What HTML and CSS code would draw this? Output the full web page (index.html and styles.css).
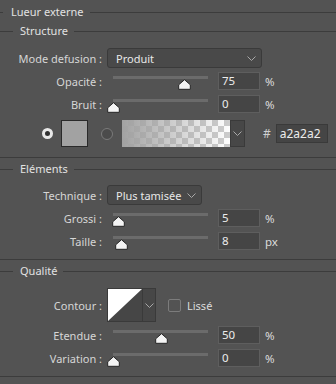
FILE: index.html
```html
<!DOCTYPE html>
<html lang="fr">
<head>
  <meta charset="UTF-8" />
  <title>Lueur externe</title>
  <link rel="stylesheet" href="styles.css">
</head>
<body>
  <div class="panel">
    <div class="legend first"><span>Lueur externe</span></div>
    <div class="legend sub"><span>Structure</span></div>

    <div class="row mode">
      <label class="lbl">Mode defusion :</label>
      <div class="select mode-select">Produit
        <svg class="chev" width="9" height="5" viewBox="0 0 9 5"><path d="M0.5 0.5 L4.5 4.5 L8.5 0.5" /></svg>
      </div>
    </div>

    <div class="row slide r-opacity">
      <label class="lbl">Opacité :</label>
      <div class="slider">
        <div class="track"></div>
        <svg class="thumb" style="left: 75%" width="13" height="11" viewBox="0 0 13 11"><path d="M6.5 0.7 L12.3 5.8 L12.3 10.3 L0.7 10.3 L0.7 5.8 Z" /></svg>
      </div>
      <div class="num">75</div><span class="unit">%</span>
    </div>

    <div class="row slide r-next">
      <label class="lbl">Bruit :</label>
      <div class="slider">
        <div class="track"></div>
        <svg class="thumb" style="left: 0%" width="13" height="11" viewBox="0 0 13 11"><path d="M6.5 0.7 L12.3 5.8 L12.3 10.3 L0.7 10.3 L0.7 5.8 Z" /></svg>
      </div>
      <div class="num">0</div><span class="unit">%</span>
    </div>

    <div class="row color-row">
      <span class="radio on"></span>
      <span class="swatch"></span>
      <span class="radio off"></span>
      <div class="gradient-pick">
        <div class="gradient"></div>
        <div class="pick-arrow">
          <svg class="chev" width="9" height="5" viewBox="0 0 9 5"><path d="M0.5 0.5 L4.5 4.5 L8.5 0.5" /></svg>
        </div>
      </div>
      <span class="hash">#</span>
      <div class="hex">a2a2a2</div>
    </div>

    <div class="sep s-1"></div>
    <div class="legend sub s-elem"><span>Eléments</span></div>

    <div class="row tech">
      <label class="lbl">Technique :</label>
      <div class="select tech-select">Plus tamisée
        <svg class="chev" width="9" height="5" viewBox="0 0 9 5"><path d="M0.5 0.5 L4.5 4.5 L8.5 0.5" /></svg>
      </div>
    </div>

    <div class="row slide r-first">
      <label class="lbl">Grossi :</label>
      <div class="slider">
        <div class="track"></div>
        <svg class="thumb" style="left: 5%" width="13" height="11" viewBox="0 0 13 11"><path d="M6.5 0.7 L12.3 5.8 L12.3 10.3 L0.7 10.3 L0.7 5.8 Z" /></svg>
      </div>
      <div class="num">5</div><span class="unit">%</span>
    </div>

    <div class="row slide r-next">
      <label class="lbl">Taille :</label>
      <div class="slider">
        <div class="track"></div>
        <svg class="thumb" style="left: 8%" width="13" height="11" viewBox="0 0 13 11"><path d="M6.5 0.7 L12.3 5.8 L12.3 10.3 L0.7 10.3 L0.7 5.8 Z" /></svg>
      </div>
      <div class="num">8</div><span class="unit">px</span>
    </div>

    <div class="sep s-2"></div>
    <div class="legend sub s-qual"><span>Qualité</span></div>

    <div class="row contour">
      <label class="lbl">Contour :</label>
      <div class="curve-pick">
        <svg class="curve" width="34" height="32" viewBox="0 0 34 32">
          <rect width="34" height="32" fill="#464646" />
          <polygon points="0,0 34,0 0,32" fill="#ffffff" />
        </svg>
        <div class="pick-arrow">
          <svg class="chev" width="9" height="5" viewBox="0 0 9 5"><path d="M0.5 0.5 L4.5 4.5 L8.5 0.5" /></svg>
        </div>
      </div>
      <span class="check"></span>
      <span class="check-lbl">Lissé</span>
    </div>

    <div class="row slide r-first">
      <label class="lbl">Etendue :</label>
      <div class="slider">
        <div class="track"></div>
        <svg class="thumb" style="left: 50%" width="13" height="11" viewBox="0 0 13 11"><path d="M6.5 0.7 L12.3 5.8 L12.3 10.3 L0.7 10.3 L0.7 5.8 Z" /></svg>
      </div>
      <div class="num">50</div><span class="unit">%</span>
    </div>

    <div class="row slide r-next">
      <label class="lbl">Variation :</label>
      <div class="slider">
        <div class="track"></div>
        <svg class="thumb" style="left: 0%" width="13" height="11" viewBox="0 0 13 11"><path d="M6.5 0.7 L12.3 5.8 L12.3 10.3 L0.7 10.3 L0.7 5.8 Z" /></svg>
      </div>
      <div class="num">0</div><span class="unit">%</span>
    </div>

    <div class="sep s-3"></div>
  </div>
</body>
</html>
```

FILE: styles.css
```css
html, body {
  margin: 0;
  background: #535353;
}

body {
  width: 336px;
  height: 384px;
  overflow: hidden;
  font-family: 'Noto Sans', sans-serif;
  font-size: 11px;
  color: #d6d6d6;
}

.panel {
  display: flex;
  flex-direction: column;
}

/* section titles with a rule on each side */
.legend {
  display: flex;
  align-items: center;
  height: 16px;
  color: #e2e2e2;
}

.legend::before,
.legend::after {
  content: '';
  height: 1px;
  background: #3c3c3c;
}

.legend::before {
  width: 3px;
}

.legend::after {
  flex: 1;
}

.legend span {
  padding: 0 6px 0 8px;
  line-height: 16px;
}

.legend.first {
  margin-top: 4px;
}

.legend.sub {
  margin-top: 3px;
}

.legend.sub::before {
  width: 13px;
}

.legend.sub span {
  padding: 0 6px 0 7px;
}

.sep {
  height: 1px;
  background: #3c3c3c;
}

.s-1 { margin-top: 10px; }
.s-elem { margin-top: 5px; }
.s-2 { margin-top: 9px; }
.s-qual { margin-top: 3px; }
.s-3 { margin-top: 9px; }

.row {
  display: flex;
  align-items: center;
}

.lbl {
  width: 102px;
  text-align: right;
  flex-shrink: 0;
  white-space: nowrap;
}

/* dropdowns */
.select {
  box-sizing: border-box;
  height: 20px;
  margin-left: 5px;
  padding-left: 8px;
  background: #494949;
  border: 1px solid #3a3a3a;
  border-radius: 3px;
  color: #e8e8e8;
  display: flex;
  align-items: center;
  position: relative;
}

.mode-select {
  width: 155px;
}

.tech-select {
  width: 95px;
}

.select .chev {
  position: absolute;
  right: 5px;
  top: 7px;
}

.chev path {
  fill: none;
  stroke: #a8a8a8;
  stroke-width: 1;
}

.mode { margin-top: 9px; }
.tech { margin-top: 8px; }

/* slider rows */
.slide {
  height: 18px;
}

.r-opacity { margin-top: 4px; }
.r-first { margin-top: 4px; }
.r-next { margin-top: 5px; }

.slider {
  position: relative;
  width: 95px;
  height: 18px;
  margin-left: 11px;
}

.track {
  position: absolute;
  left: 0;
  right: 0;
  top: 4px;
  height: 3px;
  background: #6b6b6b;
}

.thumb {
  position: absolute;
  top: 7px;
  margin-left: -6px;
}

.thumb path {
  fill: #f4f4f4;
  stroke: #262626;
  stroke-width: 1;
  stroke-linejoin: round;
}

.num {
  box-sizing: border-box;
  width: 42px;
  height: 18px;
  margin-left: 10px;
  padding-left: 3px;
  background: #454545;
  border: 1px solid #5e5e5e;
  color: #ececec;
  line-height: 16px;
  font-size: 11.5px;
}

.unit {
  margin-left: 5px;
  color: #dcdcdc;
  font-size: 11.5px;
}

/* colour row */
.color-row {
  margin-top: 7px;
  height: 27px;
}

.radio {
  box-sizing: border-box;
  border-radius: 50%;
  flex-shrink: 0;
}

.radio.on {
  width: 11px;
  height: 11px;
  margin-left: 42px;
  border: 3.5px solid #e8e8e8;
  background: #303030;
}

.radio.off {
  width: 12px;
  height: 12px;
  margin-left: 13px;
  border: 1px solid #7a7a7a;
  background: #4b4b4b;
}

.swatch {
  box-sizing: border-box;
  width: 27px;
  height: 27px;
  margin-left: 8px;
  background: #a2a2a2;
  border: 1px solid #2a2a2a;
}

.gradient-pick {
  display: flex;
  height: 27px;
  margin-left: 9px;
}

.gradient {
  width: 108px;
  height: 27px;
  background:
    linear-gradient(to right, #a2a2a2, rgba(162, 162, 162, 0)),
    repeating-conic-gradient(#cccccc 0% 25%, #ffffff 0% 50%) 0 0 / 12px 12px;
}

.pick-arrow {
  box-sizing: border-box;
  width: 15px;
  background: #474747;
  border: 1px solid #3a3a3a;
  display: flex;
  align-items: center;
  justify-content: center;
}

.hash {
  margin-left: 18px;
  color: #cfcfcf;
  font-size: 12px;
}

.hex {
  box-sizing: border-box;
  width: 52px;
  height: 19px;
  margin-left: 5px;
  padding-left: 3px;
  background: #454545;
  border: 1px solid #3a3a3a;
  color: #ececec;
  line-height: 17px;
  font-size: 12px;
}

/* contour row */
.contour {
  margin-top: 9px;
  height: 34px;
}

.curve-pick {
  display: flex;
  height: 34px;
  margin-left: 5px;
  box-sizing: border-box;
  border: 1px solid #3a3a3a;
}

.curve {
  display: block;
}

.curve-pick .pick-arrow {
  width: 13px;
  border: none;
  border-left: 1px solid #3a3a3a;
}

.check {
  box-sizing: border-box;
  width: 13px;
  height: 13px;
  margin-left: 12px;
  border: 1px solid #7c7c7c;
  border-radius: 2px;
}

.check-lbl {
  margin-left: 6px;
  color: #dcdcdc;
}
```
